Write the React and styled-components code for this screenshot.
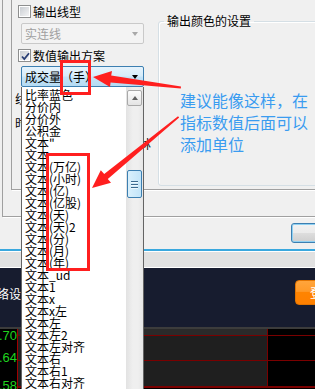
import React from "react";
import styled, { createGlobalStyle } from "styled-components";

const GlobalStyle = createGlobalStyle`
  html, body {
    margin: 0;
    padding: 0;
    background: #f0f0f0;
    overflow: hidden;
  }
  body {
    font-family: "Noto Sans CJK SC", "Noto Sans", sans-serif;
  }
`;

const Screen = styled.div`
  position: relative;
  width: 315px;
  height: 389px;
  overflow: hidden;
  background: #f0f0f0;
`;

/* dialog */
const Dialog = styled.div`
  height: 249px;
  display: flex;
  flex-direction: column;
`;

const TabFrame = styled.div`
  margin-left: 2px;
  height: 217px;
  box-sizing: border-box;
  border-left: 1px solid #a0a0a0;
  border-bottom: 1px solid #a0a0a0;
  box-shadow: 1px 1px 0 #fff;
`;

const InnerFrame = styled.div`
  margin-left: 8px;
  height: 190px;
  box-sizing: border-box;
  border-left: 1px solid #a0a0a0;
  border-bottom: 1px solid #a0a0a0;
  box-shadow: 1px 1px 0 #fff;
  display: flex;
`;

const LeftCol = styled.div`
  width: 146px;
  flex: none;
  padding: 5px 0 0 6px;
  box-sizing: border-box;
  display: flex;
  flex-direction: column;
  font-size: 12px;
`;

const CheckRow = styled.label`
  display: flex;
  align-items: center;
  gap: 2px;
  height: 13px;
  line-height: 13px;
  margin-top: ${(p) => p.$top || 0}px;
  color: #000;
`;

const Box = styled.span`
  position: relative;
  width: 13px;
  height: 13px;
  box-sizing: border-box;
  border: 1px solid #8e8f8f;
  background: #fff;
  flex: none;
  &::before {
    content: "";
    position: absolute;
    inset: 1px;
    background: linear-gradient(135deg, #c9cdd2, #f4f4f5);
  }
  svg {
    position: absolute;
    left: 1px;
    top: 1px;
  }
`;

const Combo = styled.div`
  margin: ${(p) => p.$top}px 0 0 3px;
  width: 123px;
  height: 21px;
  box-sizing: border-box;
  border: 1px solid ${(p) => (p.$active ? "#3c7fb1" : "#c9c9c9")};
  border-radius: 2px;
  background: ${(p) =>
    p.$active
      ? "linear-gradient(#e6f3fc 0%, #d6ecfa 48%, #c4e3f7 52%, #b5dbf3 100%)"
      : "#f3f3f3"};
  display: flex;
  align-items: center;
  justify-content: space-between;
  padding: 0 5px 0 3px;
  color: ${(p) => (p.$active ? "#000" : "#a0a0a0")};
  font-size: 12px;
  line-height: 19px;
`;

const Caret = styled.span`
  width: 0;
  height: 0;
  border-left: 3.5px solid transparent;
  border-right: 3.5px solid transparent;
  border-top: 4px solid ${(p) => p.$color};
`;

const HiddenLabel = styled.div`
  margin: ${(p) => p.$top}px 0 0 -3px;
  height: 12px;
  line-height: 12px;
  color: #000;
  white-space: nowrap;
`;

const Fragment = styled.div`
  margin: 9px 0 0 121px;
  height: 12px;
  line-height: 12px;
  color: #000;
`;

const GroupBox = styled.fieldset`
  flex: 1;
  margin: 14px -30px 0 0;
  padding: 0;
  height: 172px;
  box-sizing: border-box;
  border: 1px solid #d5dfe5;
  border-radius: 3px;
  box-shadow: inset 1px 1px 0 #fff;
  min-width: 0;
`;

const Legend = styled.legend`
  margin-left: 5px;
  padding: 0 3px;
  font-size: 12px;
  line-height: 14px;
  color: #000;
`;

const Note = styled.div`
  margin: 61px 0 0 21px;
  font-size: 16px;
  line-height: 22px;
  color: #3a9cf0;
  white-space: nowrap;
`;

const ButtonRow = styled.div`
  flex: 1;
  display: flex;
  justify-content: flex-end;
  padding-top: 6px;
`;

const PushButton = styled.div`
  width: 60px;
  height: 20px;
  margin-right: -36px;
  box-sizing: border-box;
  border: 1px solid #3c7fb1;
  border-radius: 3px;
  background: linear-gradient(#f2f2f2 0%, #ebebeb 48%, #dddddd 52%, #cfcfcf 100%);
  box-shadow: inset 0 0 0 1px #8fd0f2;
`;

/* bars below the dialog */
const CyanLine = styled.div`
  height: 2px;
  background: #3aa8de;
  border-bottom: 1px solid #fff;
`;

const StatusBar = styled.div`
  height: 15px;
  background: #e1e1e1;
  border-bottom: 1px solid #fff;
`;

const NavBar = styled.div`
  height: 59px;
  background: #171c2f;
  display: flex;
  justify-content: space-between;
  align-items: flex-start;
`;

const NavText = styled.div`
  margin: 20px 0 0 -15px;
  font-size: 12px;
  line-height: 12px;
  color: #fff;
  white-space: nowrap;
`;

const OrangeButton = styled.div`
  margin: 12px -14px 0 0;
  width: 34px;
  height: 25px;
  box-sizing: border-box;
  border: 1px solid #e27400;
  border-radius: 4px;
  background: linear-gradient(#ffa53c 0%, #ff9a28 45%, #ff8400 50%, #ff8000 100%);
  color: #fff;
  font-size: 12px;
  line-height: 23px;
  padding-left: 14px;
  overflow: hidden;
  white-space: nowrap;
`;

/* chart */
const Chart = styled.div`
  height: 62px;
  border-top: 2px solid #3c3c3c;
  display: flex;
  background: #000;
`;

const Axis = styled.div`
  width: 17px;
  flex: none;
  border-right: 1px solid #a00000;
  display: flex;
  flex-direction: column;
  overflow: hidden;
`;

const Tick = styled.div`
  height: ${(p) => p.$h}px;
  flex: none;
  font-family: "Liberation Sans", Arial, sans-serif;
  font-size: 13px;
  line-height: 14px;
  color: #1fd41f;
  text-align: right;
  white-space: nowrap;
  direction: rtl;
`;

const Plot = styled.div`
  flex: 1;
  display: flex;
  flex-direction: column;
`;

const GridRow = styled.div`
  height: ${(p) => p.$h}px;
  flex: none;
  display: flex;
  border-bottom: ${(p) => p.$line}px solid #7a0000;
`;

const PlotCell = styled.div`
  flex: 1;
  background: ${(p) => p.$bg};
`;

const PriceCell = styled.div`
  width: 47px;
  background: #000;
  border-left: 1px solid #7a0000;
`;

/* dropdown list */
const DropList = styled.div`
  position: absolute;
  left: 21px;
  top: 87px;
  width: 123px;
  height: 310px;
  box-sizing: border-box;
  border: 1px solid #646464;
  border-top: none;
  background: #fff;
  display: flex;
`;

const Items = styled.div`
  flex: 1;
  padding: 2px 0 0 3px;
  overflow: hidden;
`;

const Item = styled.div`
  height: 12px;
  line-height: 12px;
  font-size: 12px;
  color: #000;
  white-space: nowrap;
`;

const ScrollBar = styled.div`
  width: 17px;
  flex: none;
  background: linear-gradient(to right, #e2e2e2, #efefef 40%, #efefef 70%, #e6e6e6);
  display: flex;
  flex-direction: column;
  align-items: center;
  padding-top: 3px;
`;

const ArrowButton = styled.div`
  width: 15px;
  height: 16px;
  box-sizing: border-box;
  border: 1px solid #a9a9a9;
  border-radius: 2px;
  background: linear-gradient(#fcfcfc, #e4e4e4);
  display: flex;
  align-items: center;
  justify-content: center;
  &::after {
    content: "";
    border-left: 3.5px solid transparent;
    border-right: 3.5px solid transparent;
    border-bottom: 4px solid #606060;
  }
`;

const Thumb = styled.div`
  margin-top: 64px;
  width: 15px;
  height: 28px;
  box-sizing: border-box;
  border: 1px solid #3c7fb1;
  border-radius: 2px;
  background: linear-gradient(to right, #d9f0fc, #c2e4f8);
  display: flex;
  flex-direction: column;
  align-items: center;
  justify-content: center;
  gap: 2px;
  span {
    width: 7px;
    height: 1px;
    background: #3c6a8f;
    box-shadow: 0 1px 0 #eef8fe;
  }
`;

const Overlay = styled.svg`
  position: absolute;
  left: 0;
  top: 0;
  pointer-events: none;
`;

const items = [
  "比率蓝色",
  "分价内",
  "分价外",
  "公积金",
  "文本\"",
  "文本",
  "文本(万亿)",
  "文本(小时)",
  "文本(亿)",
  "文本(亿股)",
  "文本(天)",
  "文本(天)2",
  "文本(分)",
  "文本(月)",
  "文本(年)",
  "文本_ud",
  "文本1",
  "文本x",
  "文本x左",
  "文本左",
  "文本左2",
  "文本左对齐",
  "文本右",
  "文本右1",
  "文本右对齐",
];

function Check({ checked }) {
  return (
    <Box>
      {checked && (
        <svg width="11" height="11" viewBox="0 0 11 11">
          <path d="M2 5.5 L4.3 8 L9 2.2" fill="none" stroke="#2a3f75" strokeWidth="1.8" />
        </svg>
      )}
    </Box>
  );
}

export default function App() {
  return (
    <Screen>
      <GlobalStyle />
      <Dialog>
        <TabFrame>
          <InnerFrame>
            <LeftCol>
              <CheckRow>
                <Check />
                输出线型
              </CheckRow>
              <Combo $top={5}>
                实连线
                <Caret $color="#a8a8a8" />
              </Combo>
              <CheckRow $top={5}>
                <Check checked />
                数值输出方案
              </CheckRow>
              <Combo $top={4} $active>
                成交量（手）
                <Caret $color="#000" />
              </Combo>
              <HiddenLabel $top={6}>线宽</HiddenLabel>
              <HiddenLabel $top={12}>时间</HiddenLabel>
              <Fragment>林</Fragment>
            </LeftCol>
            <GroupBox>
              <Legend>输出颜色的设置</Legend>
              <Note>
                建议能像这样，在
                <br />
                指标数值后面可以
                <br />
                添加单位
              </Note>
            </GroupBox>
          </InnerFrame>
        </TabFrame>
        <ButtonRow>
          <PushButton />
        </ButtonRow>
      </Dialog>
      <CyanLine />
      <StatusBar />
      <NavBar>
        <NavText>网络设置</NavText>
        <OrangeButton>登录</OrangeButton>
      </NavBar>
      <Chart>
        <Axis>
          <Tick $h={22}>8.70</Tick>
          <Tick $h={28}>8.64</Tick>
          <Tick $h={14}>8.58</Tick>
        </Axis>
        <Plot>
          <GridRow $h={6} $line={1}>
            <PlotCell $bg="#2a2a2a" />
            <PriceCell />
          </GridRow>
          <GridRow $h={24} $line={1}>
            <PlotCell $bg="#1f1f1f" />
            <PriceCell />
          </GridRow>
          <GridRow $h={25} $line={2}>
            <PlotCell $bg="#1f1f1f" />
            <PriceCell />
          </GridRow>
        </Plot>
      </Chart>

      <DropList>
        <Items>
          {items.map((t) => (
            <Item key={t}>{t}</Item>
          ))}
        </Items>
        <ScrollBar>
          <ArrowButton />
          <Thumb>
            <span />
            <span />
            <span />
          </Thumb>
        </ScrollBar>
      </DropList>

      <Overlay width="315" height="389" viewBox="0 0 315 389">
        <g fill="none" stroke="#ff1f1f" strokeWidth="3">
          <rect x="61.5" y="61.5" width="28" height="32" />
          <rect x="47.5" y="154.5" width="41" height="115" />
        </g>
        <g fill="#ff1f1f">
          <polygon points="93,77 112,71 111.2,75.5 181,86.4 180.8,88.6 110.6,82.5 110,87" />
          <polygon points="92,188 100.8,170.3 104.2,174 178,116.2 179.2,117.6 107.8,179 111,182.7" />
        </g>
      </Overlay>
    </Screen>
  );
}
